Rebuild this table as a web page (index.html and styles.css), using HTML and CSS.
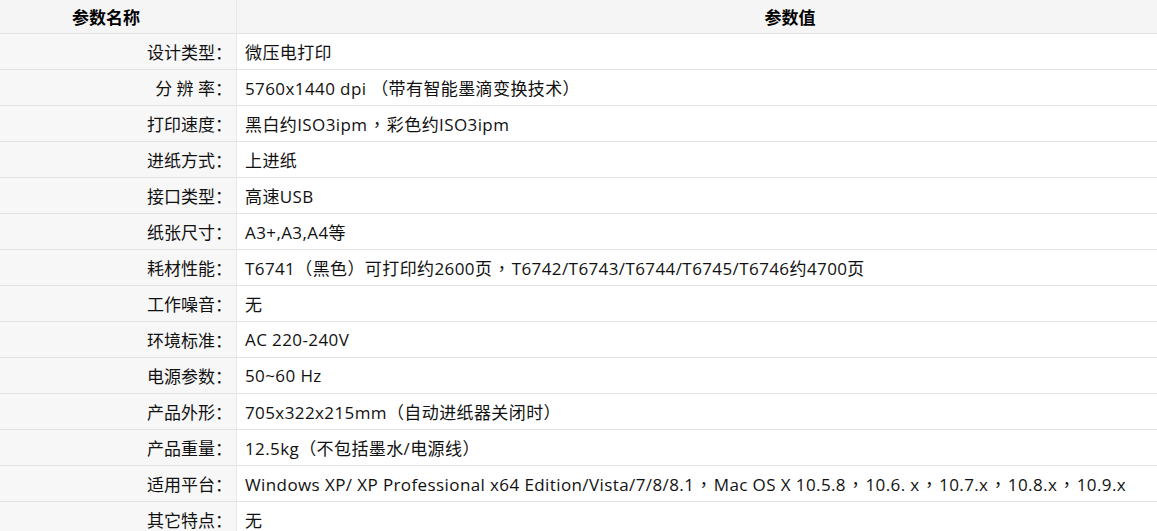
FILE: index.html
```html
<!DOCTYPE html>
<html lang="zh-CN">
<head>
    <meta charset="UTF-8">
    <title>参数表</title>
    <link rel="stylesheet" href="styles.css">
</head>
<body>

    <!-- 产品参数 -->
    <table class="spec-table">
        <thead>
            <tr>
                <th class="name-head">参数名称</th>
                <th class="value-head">参数值</th>
            </tr>
        </thead>
        <tbody>
            <tr><td class="name">设计类型：</td><td class="value">微压电打印</td></tr>
            <tr><td class="name">分 辨 率：</td><td class="value">5760x1440 dpi （带有智能墨滴变换技术）</td></tr>
            <tr><td class="name">打印速度：</td><td class="value">黑白约ISO3ipm<span class="comma" lang="zh-TW">，</span>彩色约ISO3ipm</td></tr>
            <tr><td class="name">进纸方式：</td><td class="value">上进纸</td></tr>
            <tr><td class="name">接口类型：</td><td class="value">高速USB</td></tr>
            <tr><td class="name">纸张尺寸：</td><td class="value">A3+,A3,A4等</td></tr>
            <tr><td class="name">耗材性能：</td><td class="value">T6741（黑色）可打印约2600页<span class="comma" lang="zh-TW">，</span>T6742/T6743/T6744/T6745/T6746约4700页</td></tr>
            <tr><td class="name">工作噪音：</td><td class="value">无</td></tr>
            <tr><td class="name">环境标准：</td><td class="value">AC 220-240V</td></tr>
            <tr><td class="name">电源参数：</td><td class="value">50~60 Hz</td></tr>
            <tr><td class="name">产品外形：</td><td class="value">705x322x215mm（自动进纸器关闭时）</td></tr>
            <tr><td class="name">产品重量：</td><td class="value">12.5kg（不包括墨水/电源线）</td></tr>
            <tr><td class="name">适用平台：</td><td class="value">Windows XP/ XP Professional x64 Edition/Vista/7/8/8.1<span class="comma" lang="zh-TW">，</span>Mac OS X 10.5.8<span class="comma" lang="zh-TW">，</span>10.6. x<span class="comma" lang="zh-TW">，</span>10.7.x<span class="comma" lang="zh-TW">，</span>10.8.x<span class="comma" lang="zh-TW">，</span>10.9.x</td></tr>
            <tr><td class="name">其它特点：</td><td class="value">无</td></tr>
        </tbody>
    </table>

</body>
</html>
```

FILE: styles.css
```css
/* spec table */
body {
    margin: 0;
    font-family: 'Open Sans', 'Noto Sans CJK SC', sans-serif;
    font-size: 17px;
    color: #111;
    background-color: #fff;
    overflow: hidden;
}

.spec-table {
    width: 100%;
    border-collapse: collapse;
}

.spec-table th {
    height: 33px;
    padding: 0;
    background-color: #f5f5f5;
    font-family: 'Noto Sans CJK SC', sans-serif;
    font-weight: bold;
    color: #000;
    text-align: center;
    border-bottom: 1px solid #e3e3e3;
}

.name-head {
    width: 212px;
    padding-right: 24px !important;
    border-right: 1px solid #e8e8e8;
}

.value-head {
    padding-left: 186px !important;
}

.spec-table td {
    height: 35px;
    padding: 0;
    border-bottom: 1px solid #e3e3e3;
    white-space: nowrap;
}

.name {
    text-align: right;
    padding-right: 4px !important;
    background-color: #f7f7f7;
    border-right: 1px solid #e8e8e8;
}

.value {
    padding-left: 8px !important;
    letter-spacing: 0.4px;
}

/* centred full-width comma */
.comma {
    font-family: 'Noto Sans CJK TC', sans-serif;
    padding: 0 1px;
}
```
